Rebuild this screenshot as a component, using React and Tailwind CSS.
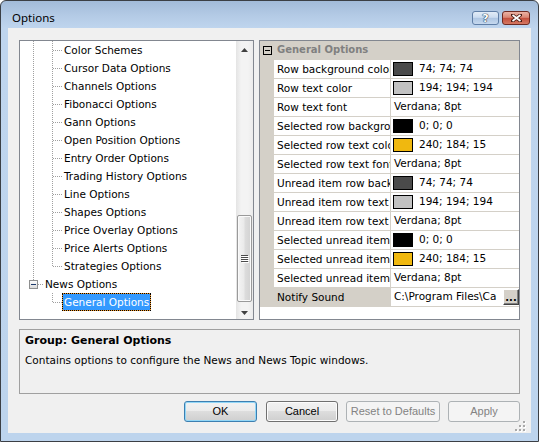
import React from "react";

const treeItems = [
  "Color Schemes",
  "Cursor Data Options",
  "Channels Options",
  "Fibonacci Options",
  "Gann Options",
  "Open Position Options",
  "Entry Order Options",
  "Trading History Options",
  "Line Options",
  "Shapes Options",
  "Price Overlay Options",
  "Price Alerts Options",
  "Strategies Options",
];

const props = [
  { name: "Row background color", swatch: "bg-[#4a4a4a]", value: "74; 74; 74" },
  { name: "Row text color", swatch: "bg-[#c2c2c2]", value: "194; 194; 194" },
  { name: "Row text font", value: "Verdana; 8pt" },
  { name: "Selected row background color", swatch: "bg-black", value: "0; 0; 0" },
  { name: "Selected row text color", swatch: "bg-[#f0b80f]", value: "240; 184; 15" },
  { name: "Selected row text font", value: "Verdana; 8pt" },
  { name: "Unread item row background color", swatch: "bg-[#4a4a4a]", value: "74; 74; 74" },
  { name: "Unread item row text color", swatch: "bg-[#c2c2c2]", value: "194; 194; 194" },
  { name: "Unread item row text font", value: "Verdana; 8pt" },
  { name: "Selected unread item row background color", swatch: "bg-black", value: "0; 0; 0" },
  { name: "Selected unread item row text color", swatch: "bg-[#f0b80f]", value: "240; 184; 15" },
  { name: "Selected unread item row text font", value: "Verdana; 8pt" },
];

// dotted tree connector
const ln = { stroke: "#a0a0a0", strokeWidth: 1, strokeDasharray: "1 1" };

function TreeRow({ label, last }) {
  return (
    <div className="flex h-[18px] items-center shrink-0">
      <svg width="42" height="18" className="shrink-0" shapeRendering="crispEdges">
        <line x1="13.5" y1="0" x2="13.5" y2="18" {...ln} />
        <line x1="32.5" y1="0" x2="32.5" y2={last ? 10 : 18} {...ln} />
        <line x1="33" y1="9.5" x2="42" y2="9.5" {...ln} />
      </svg>
      <span className="px-[2px] leading-[18px] whitespace-nowrap">{label}</span>
    </div>
  );
}

function NewsRow() {
  return (
    <div className="flex h-[18px] items-center shrink-0">
      <svg width="25" height="18" className="shrink-0" shapeRendering="crispEdges">
        <defs>
          <linearGradient id="bx" x1="0" y1="0" x2="0" y2="1">
            <stop offset="0" stopColor="#ffffff" />
            <stop offset="1" stopColor="#d8d8d8" />
          </linearGradient>
        </defs>
        <line x1="13.5" y1="0" x2="13.5" y2="5" {...ln} />
        <rect x="9.5" y="5.5" width="8" height="8" fill="url(#bx)" stroke="#8e8f8f" />
        <line x1="11" y1="9.5" x2="16" y2="9.5" stroke="#1c3a6b" />
        <line x1="18" y1="9.5" x2="24" y2="9.5" {...ln} />
      </svg>
      <span className="leading-[18px] whitespace-nowrap">News Options</span>
    </div>
  );
}

function SelectedRow() {
  return (
    <div className="flex h-[18px] items-center shrink-0">
      <svg width="42" height="18" className="shrink-0" shapeRendering="crispEdges">
        <line x1="32.5" y1="0" x2="32.5" y2="10" {...ln} />
        <line x1="33" y1="9.5" x2="42" y2="9.5" {...ln} />
      </svg>
      <span className="h-[18px] flex border border-dotted border-black bg-[#f29a2e]">
        <span className="bg-[#3399ff] text-white px-px leading-[16px] whitespace-nowrap">General Options</span>
      </span>
    </div>
  );
}

function Scrollbar() {
  return (
    <div className="w-[17px] shrink-0 flex flex-col bg-[linear-gradient(to_right,#e4e4e4,#f3f3f3_30%,#f3f3f3_70%,#ebebeb)]">
      <div className="h-[17px] shrink-0 flex items-center justify-center">
        <svg width="7" height="4">
          <polygon points="3.5,0 7,4 0,4" fill="#404040" />
        </svg>
      </div>
      <div className="h-[157px] shrink-0" />
      <div className="mx-px h-[87px] shrink-0 rounded-[2px] border border-[#9a9a9a] shadow-[inset_0_0_0_1px_#fafafa] bg-[linear-gradient(to_right,#f4f4f4,#eaeaea_45%,#dcdcdc_55%,#d2d2d2)] flex items-center justify-center">
        <svg width="8" height="8" shapeRendering="crispEdges">
          {[0, 2, 4, 6].map((y) => (
            <g key={y}>
              <line x1="0" y1={y + 0.5} x2="7" y2={y + 0.5} stroke="#4a4a4a" />
              <line x1="1" y1={y + 1.5} x2="8" y2={y + 1.5} stroke="#ffffff" />
            </g>
          ))}
        </svg>
      </div>
      <div className="flex-1 flex justify-center pt-[9px]">
        <svg width="7" height="4">
          <polygon points="0,0 7,0 3.5,4" fill="#404040" />
        </svg>
      </div>
    </div>
  );
}

function Tree() {
  return (
    <div className="w-[235px] shrink-0 border border-[#828790] bg-white flex">
      <div className="flex-1 flex flex-col overflow-hidden">
        {treeItems.map((t, i) => (
          <TreeRow key={t} label={t} last={i === treeItems.length - 1} />
        ))}
        <NewsRow />
        <SelectedRow />
      </div>
      <Scrollbar />
    </div>
  );
}

function PropRow({ name, swatch, value }) {
  return (
    <div className="h-[19px] pt-px flex shrink-0">
      <div className="w-[14px] shrink-0" />
      <div className="w-[116px] shrink-0 bg-white pl-[3px] overflow-hidden whitespace-nowrap leading-[18px]">
        {name}
      </div>
      <div className="ml-px flex-1 bg-white flex items-center overflow-hidden whitespace-nowrap">
        {swatch ? (
          <>
            <span className={`ml-[2px] w-[20px] h-[14px] shrink-0 border border-black ${swatch}`} />
            <span className="ml-[6px]">{value}</span>
          </>
        ) : (
          <span className="ml-[3px]">{value}</span>
        )}
      </div>
    </div>
  );
}

function Grid() {
  return (
    <div className="w-[261px] shrink-0 border border-[#828790] bg-[#d4d0c8] flex flex-col">
      <div className="h-[18px] shrink-0 flex items-center">
        <div className="ml-[3px] w-[9px] h-[9px] border border-black flex items-center justify-center">
          <div className="w-[5px] h-px bg-black" />
        </div>
        <span className="ml-[5px] font-bold text-[10px] text-[#808080] leading-[18px]">General Options</span>
      </div>
      {props.map((p) => (
        <PropRow key={p.name} {...p} />
      ))}
      <div className="h-[19px] pt-px flex shrink-0">
        <div className="w-[14px] shrink-0" />
        <div className="w-[116px] shrink-0 pl-[3px] leading-[18px] whitespace-nowrap">Notify Sound</div>
        <div className="ml-px flex-1 bg-white flex items-center overflow-hidden">
          <span className="ml-[3px] flex-1 whitespace-nowrap overflow-hidden">{"C:\\Program Files\\Ca"}</span>
          <div className="w-[16px] h-[16px] shrink-0 border border-t-white border-l-white border-b-[#404040] border-r-[#404040] shadow-[inset_-1px_-1px_0_#808080] bg-[#d4d0c8] flex items-end justify-center pb-[1px] font-bold text-[10px] leading-[10px]">
            ...
          </div>
        </div>
      </div>
      <div className="mt-px flex-1 bg-white" />
    </div>
  );
}

const btn =
  "h-[21px] rounded-[3px] border flex items-center justify-center font-['Liberation_Sans',sans-serif] text-[11px]";
const btnNormal =
  "border-[#707070] shadow-[inset_0_0_0_1px_#fcfcfc] bg-[linear-gradient(to_bottom,#f2f2f2,#ebebeb_50%,#dddddd_50%,#cfcfcf)]";
const btnOff = "border-[#adb2b5] bg-[#f4f4f4] text-[#838383]";

export default function App() {
  return (
    <div className="w-[539px] h-[442px] bg-white">
      <div className="w-[539px] h-[442px] flex flex-col border border-[#3b3f45] rounded-t-[6px] overflow-hidden px-[7px] pb-[8px] bg-[linear-gradient(to_bottom,#a2bbd9_0px,#b3cae5_14px,#bfd5ee_27px,#bdd4ed_100%)] font-['DejaVu_Sans',sans-serif] text-[10.5px] text-black">
        {/* TITLE BAR */}
        <div className="h-[27px] shrink-0 flex items-start pt-[9px] pl-[4px] pr-px">
          <span className="font-['Noto_Sans',sans-serif] text-[11.5px] leading-[15px]">Options</span>
          <div className="ml-auto mt-px flex gap-[3px]">
            <div className="w-[27px] h-[14px] rounded-[3px] border border-[#5f7ea6] bg-[linear-gradient(to_bottom,#e2ecf7,#cbdcf0_45%,#adc5e2_50%,#c6d9ef)] flex items-center justify-center">
              <span className="font-bold text-[11px] leading-none text-white [text-shadow:0_0_1px_#1d3350,0_0_1px_#1d3350,0_0_1px_#1d3350]">
                ?
              </span>
            </div>
            <div className="w-[28px] h-[14px] rounded-[3px] border border-[#6e2a22] bg-[linear-gradient(to_bottom,#ebb3a5,#da8674_45%,#c34e3c_50%,#d57862)] flex items-center justify-center">
              <svg width="11" height="8">
                <path d="M1.5 1 L9.5 7 M9.5 1 L1.5 7" stroke="#4a1a12" strokeWidth="3.4" strokeLinecap="square" />
                <path d="M1.5 1 L9.5 7 M9.5 1 L1.5 7" stroke="#ffffff" strokeWidth="1.7" />
              </svg>
            </div>
          </div>
        </div>

        {/* CONTENT */}
        <div className="flex-1 relative bg-[#f0f0f0] flex flex-col px-[11px] pt-[12px] pb-[11px]">
          <div className="h-[280px] shrink-0 flex gap-[5px]">
            <Tree />
            <Grid />
          </div>

          <div className="mt-[9px] h-[65px] shrink-0 border border-[#a0a0a0] pl-[5px] pt-[3px]">
            <div className="font-bold text-[11px] leading-[16px]">Group: General Options</div>
            <div className="mt-[3px] leading-[16px]">Contains options to configure the News and News Topic windows.</div>
          </div>

          <div className="mt-[7px] h-[21px] shrink-0 flex justify-end gap-[8px]">
            <button className={`${btn} w-[73px] mr-px border-[#3c7fb1] shadow-[inset_0_0_0_1px_#93d7f7] bg-[linear-gradient(to_bottom,#f2f2f2,#ebebeb_50%,#dddddd_50%,#cfcfcf)]`}>
              OK
            </button>
            <button className={`${btn} ${btnNormal} w-[72px]`}>Cancel</button>
            <button className={`${btn} ${btnOff} w-[94px]`}>Reset to Defaults</button>
            <button className={`${btn} ${btnOff} w-[72px]`}>Apply</button>
          </div>

          {/* size grip */}
          <svg width="11" height="11" className="absolute right-[5px] bottom-[1px]" shapeRendering="crispEdges">
            {[
              [8, 0],
              [4, 4],
              [8, 4],
              [0, 8],
              [4, 8],
              [8, 8],
            ].map(([x, y]) => (
              <g key={`${x}-${y}`}>
                <rect x={x + 1} y={y + 1} width="2" height="2" fill="#ffffff" />
                <rect x={x} y={y} width="2" height="2" fill="#a8a8a8" />
              </g>
            ))}
          </svg>
        </div>
      </div>
    </div>
  );
}
